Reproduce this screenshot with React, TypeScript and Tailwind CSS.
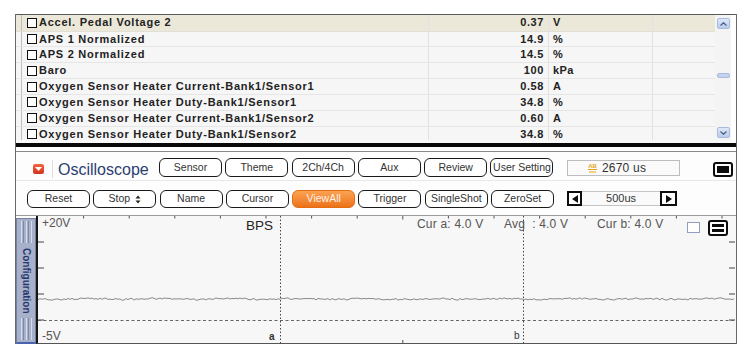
import React from "react";

const rows: [string, string, string][] = [
  ["Accel. Pedal Voltage 2", "0.37", "V"],
  ["APS 1 Normalized", "14.9", "%"],
  ["APS 2 Normalized", "14.5", "%"],
  ["Baro", "100", "kPa"],
  ["Oxygen Sensor Heater Current-Bank1/Sensor1", "0.58", "A"],
  ["Oxygen Sensor Heater Duty-Bank1/Sensor1", "34.8", "%"],
  ["Oxygen Sensor Heater Current-Bank1/Sensor2", "0.60", "A"],
  ["Oxygen Sensor Heater Duty-Bank1/Sensor2", "34.8", "%"],
];

const signal = (() => {
  let s = 98765;
  const rnd = () => {
    s = (Math.imul(s, 1103515245) + 12345) >>> 0;
    return (s >>> 8) / 16777216;
  };
  const pts: string[] = [];
  for (let x = 0; x <= 697; x += 2) {
    const y = 83 + (rnd() - 0.5) * 1.8 + Math.sin(x / 11) * 0.4;
    pts.push(`${x},${y.toFixed(1)}`);
  }
  return pts.join(" ");
})();

function Btn({ label, active = false, children }: { label?: string; active?: boolean; children?: React.ReactNode }) {
  return (
    <div
      className={
        active
          ? "w-[63px] h-full shrink-0 rounded-[6px] border border-[#e46d12] bg-linear-to-b from-[#fba352] to-[#ec7214] text-[#fff4e8] flex items-center justify-center text-[10.5px]"
          : "w-[63px] h-full shrink-0 rounded-[6px] border-[1.7px] border-[#1a1a1a] bg-white text-[#333] flex items-center justify-center text-[10.5px]"
      }
    >
      {label}
      {children}
    </div>
  );
}

function Grip() {
  return (
    <div className="flex gap-[1.5px] justify-center h-[22px]">
      <div className="w-px h-full bg-[#d7dcea]" />
      <div className="w-px h-full bg-[#7d89a8]" />
      <div className="w-px h-full bg-[#d7dcea]" />
      <div className="w-px h-full bg-[#7d89a8]" />
      <div className="w-px h-full bg-[#d7dcea]" />
    </div>
  );
}

export default function App() {
  const ticksTop = Array.from({ length: 15 }, (_, i) => (i + 1) * 45.6);
  return (
    <div className="w-[749px] h-[357px] bg-white overflow-hidden font-['Liberation_Sans',Arial,sans-serif] pt-[14px] pl-[15px]">
      <div className="w-[722px] border-x border-[#6a6a6a]">
        {/* data list */}
        <div className="h-[126px] border-t border-[#5a5a5a] flex overflow-hidden bg-[#f6f6f6]">
          <div className="flex-1 flex flex-col overflow-hidden">
            {rows.map((r, i) => (
              <div
                key={i}
                className={
                  i === 0
                    ? "flex shrink-0 h-[16.6px] bg-[#ebe8d9] border-b border-[#e2e0d6]"
                    : "flex shrink-0 h-[15.86px] bg-[#f6f6f6] border-b border-[#e6e6e6]"
                }
              >
                <div className="w-[6px] shrink-0 border-r border-[#bdbdbd]" />
                <div className="w-[407px] shrink-0 flex items-center pl-[5px] border-r border-[#e2e2e2]">
                  <div className="w-[10px] h-[10px] border border-[#111] bg-white mr-[2px] shrink-0" />
                  <span className="text-[11px] font-bold tracking-[0.75px] text-[#222] leading-none whitespace-nowrap">{r[0]}</span>
                </div>
                <div className="w-[120px] shrink-0 flex items-center justify-end pr-[4px] border-r border-[#e2e2e2]">
                  <span className="text-[11px] font-bold tracking-[0.6px] text-[#222] leading-none">{r[1]}</span>
                </div>
                <div className="w-[104px] shrink-0 flex items-center pl-[4px] border-r border-[#e2e2e2]">
                  <span className="text-[11px] font-bold tracking-[0.4px] text-[#222] leading-none">{r[2]}</span>
                </div>
                <div className="flex-1" />
              </div>
            ))}
          </div>
          {/* scrollbar */}
          <div className="w-[16px] shrink-0 bg-[#f4f4f4] flex flex-col items-center pt-[3px]">
            <div className="w-[13px] h-[11px] rounded-[2px] bg-linear-to-b from-[#dfe8f8] to-[#b9cbec] border border-[#a9bbdc] flex items-center justify-center">
              <svg width="7" height="4" viewBox="0 0 7 4"><path d="M0.5 3.5 L3.5 0.8 L6.5 3.5" fill="none" stroke="#4d5f86" strokeWidth="1.3" /></svg>
            </div>
            <div className="w-[13px] h-[5px] mt-[44px] rounded-[2px] bg-[#c3d2ee] border border-[#aabbdc]" />
            <div className="w-[13px] h-[11px] mt-[49px] rounded-[2px] bg-linear-to-b from-[#dfe8f8] to-[#b9cbec] border border-[#a9bbdc] flex items-center justify-center">
              <svg width="7" height="4" viewBox="0 0 7 4"><path d="M0.5 0.5 L3.5 3.2 L6.5 0.5" fill="none" stroke="#4d5f86" strokeWidth="1.3" /></svg>
            </div>
          </div>
          <div className="w-[5px] shrink-0 bg-white" />
        </div>
        <div className="h-[3px] bg-[#fafafa]" />
        <div className="h-[4px] bg-[#0a0a0a]" />
        <div className="h-[4px] bg-white" />
        <div className="h-px bg-[#8a8a8a]" />

        {/* oscilloscope panel */}
        <div className="bg-[#fdfdfd]">
          {/* header */}
          <div className="h-[29px] flex items-start pt-[6px] pl-[17px] border-b border-[#e8e8e8]">
            <div className="mt-[6px] w-[11px] h-[10px] rounded-[2px] bg-linear-to-b from-[#f4663f] to-[#cf3320] flex items-center justify-center shrink-0">
              <svg width="7" height="4" viewBox="0 0 7 4"><path d="M0 0 L7 0 L3.5 4 Z" fill="#fff" /></svg>
            </div>
            <div className="mt-[2px] ml-[8px] w-px h-[18px] bg-[#dedede] shrink-0" />
            <div className="mt-[4px] ml-[5px] w-[101px] shrink-0 text-[16px] leading-none text-[#2c3e72]">Oscilloscope</div>
            <div className="flex gap-[3.3px] h-[19px]">
              <Btn label="Sensor" />
              <Btn label="Theme" />
              <Btn label="2Ch/4Ch" />
              <Btn label="Aux" />
              <Btn label="Review" />
              <Btn label="User Setting" />
            </div>
            <div className="mt-[2px] ml-[13.5px] w-[113px] h-[16px] border border-[#bdbdbd] bg-[#fafafa] flex items-center pl-[20px] shrink-0">
              <div className="flex flex-col items-center leading-none mr-[5px]">
                <span className="text-[6px] font-bold text-[#e3a51c] leading-none">AB</span>
                <div className="w-[9px] h-px bg-[#e3a51c]" />
                <div className="w-[7px] h-[2px] mt-px bg-[#f0cf80]" />
              </div>
              <span className="text-[12px] text-[#333] leading-none tracking-[0.2px]">2670 us</span>
            </div>
            <div className="mt-[4px] ml-[33px] w-[20px] h-[15px] rounded-[3px] border-2 border-[#0d0d0d] p-[2px] shrink-0">
              <div className="w-full h-full bg-[#0d0d0d]" />
            </div>
          </div>

          {/* row 2 */}
          <div className="h-[35px] flex items-start pt-[9px] pl-[11px] border-b border-[#9a9a9a]">
            <div className="flex gap-[3.3px] h-[18px]">
              <Btn label="Reset" />
              <Btn>
                <span>Stop</span>
                <svg className="ml-[5px]" width="6" height="9" viewBox="0 0 6 9">
                  <path d="M0.5 3.6 L3 0.5 L5.5 3.6 Z" fill="#222" />
                  <path d="M0.5 5.4 L3 8.5 L5.5 5.4 Z" fill="#222" />
                </svg>
              </Btn>
              <Btn label="Name" />
              <Btn label="Cursor" />
              <Btn label="ViewAll" active />
              <Btn label="Trigger" />
              <Btn label="SingleShot" />
              <Btn label="ZeroSet" />
            </div>
            <div className="ml-[13px] mt-[1px] flex h-[15px]">
              <div className="w-[15px] h-full border-2 border-[#0d0d0d] bg-white flex items-center justify-center">
                <svg width="6" height="8" viewBox="0 0 6 8"><path d="M6 0 L0 4 L6 8 Z" fill="#0d0d0d" /></svg>
              </div>
              <div className="w-[78px] h-full border-y border-[#c4c4c4] bg-[#fafafa] flex items-center justify-center text-[11px] text-[#333] leading-none">500us</div>
              <div className="w-[17px] h-full border-2 border-[#0d0d0d] bg-white flex items-center justify-center">
                <svg width="6" height="8" viewBox="0 0 6 8"><path d="M0 0 L6 4 L0 8 Z" fill="#0d0d0d" /></svg>
              </div>
            </div>
          </div>

          {/* graph row */}
          <div className="h-[128px] flex">
            <div className="w-[20px] shrink-0 mt-[2px] h-[126px] bg-[#a7b1c9] border border-[#7682a1] border-b-2 border-b-[#4a63b0] flex flex-col items-center pt-[2px] pb-[2px]">
              <Grip />
              <div className="flex-1 flex items-center justify-center">
                <span className="[writing-mode:vertical-rl] text-[10px] font-bold text-[#263770] leading-none">Configuration</span>
              </div>
              <Grip />
            </div>
            <div className="relative flex-1 h-full bg-[#f7f7f7] border-l-2 border-[#161616] border-b border-b-[#555] overflow-hidden">
              <svg className="absolute left-0 top-0" width="697" height="127">
                {ticksTop.map((x, i) => (
                  <line key={"t" + i} x1={x} y1={0} x2={x} y2={i === 7 ? 3.5 : 2.5} stroke="#555" strokeWidth="1" />
                ))}
                <line x1={364.8} y1={124} x2={364.8} y2={127} stroke="#555" strokeWidth="1" />
                {[26, 52, 78, 104].map((y) => (
                  <g key={"y" + y}>
                    <line x1={0} y1={y} x2={6} y2={y} stroke="#444" strokeWidth="1" />
                    <line x1={691} y1={y} x2={697} y2={y} stroke="#444" strokeWidth="1" />
                  </g>
                ))}
                <line x1={0} y1={104.5} x2={697} y2={104.5} stroke="#666" strokeWidth="1" strokeDasharray="3 2.5" />
                <polyline points={signal} fill="none" stroke="#8a8a8a" strokeWidth="1" />
                <line x1={242.5} y1={0} x2={242.5} y2={127} stroke="#444" strokeWidth="1" strokeDasharray="1.5 2" />
                <line x1={485.5} y1={0} x2={485.5} y2={127} stroke="#444" strokeWidth="1" strokeDasharray="1.5 2" />
              </svg>
              <div className="absolute left-[4px] top-[1px] text-[12px] leading-none text-[#555]">+20V</div>
              <div className="absolute left-[208px] top-[3px] text-[13.5px] leading-none text-[#222]">BPS</div>
              <div className="absolute left-[379px] top-[2px] text-[12px] leading-none text-[#555] tracking-[0.2px] whitespace-pre">Cur a: 4.0 V</div>
              <div className="absolute left-[466px] top-[2px] text-[12px] leading-none text-[#555] tracking-[0.2px] whitespace-pre">Avg  : 4.0 V</div>
              <div className="absolute left-[559px] top-[2px] text-[12px] leading-none text-[#555] tracking-[0.2px] whitespace-pre">Cur b: 4.0 V</div>
              <div className="absolute left-[649px] top-[6px] w-[13px] h-[11px] border border-[#8e9fc2] bg-white" />
              <div className="absolute left-[670px] top-[4px] w-[20px] h-[16px] rounded-[3px] border-2 border-[#0d0d0d] bg-white flex flex-col justify-center gap-[2px] px-[2px]">
                <div className="h-[3px] bg-[#0d0d0d]" />
                <div className="h-[3px] bg-[#0d0d0d]" />
              </div>
              <div className="absolute left-[4px] top-[114px] text-[12px] leading-none text-[#555]">-5V</div>
              <div className="absolute left-[231px] top-[116px] text-[10px] leading-none text-[#333] font-bold">a</div>
              <div className="absolute left-[476px] top-[115px] text-[10px] leading-none text-[#333]">b</div>
            </div>
          </div>
        </div>
      </div>
    </div>
  );
}
